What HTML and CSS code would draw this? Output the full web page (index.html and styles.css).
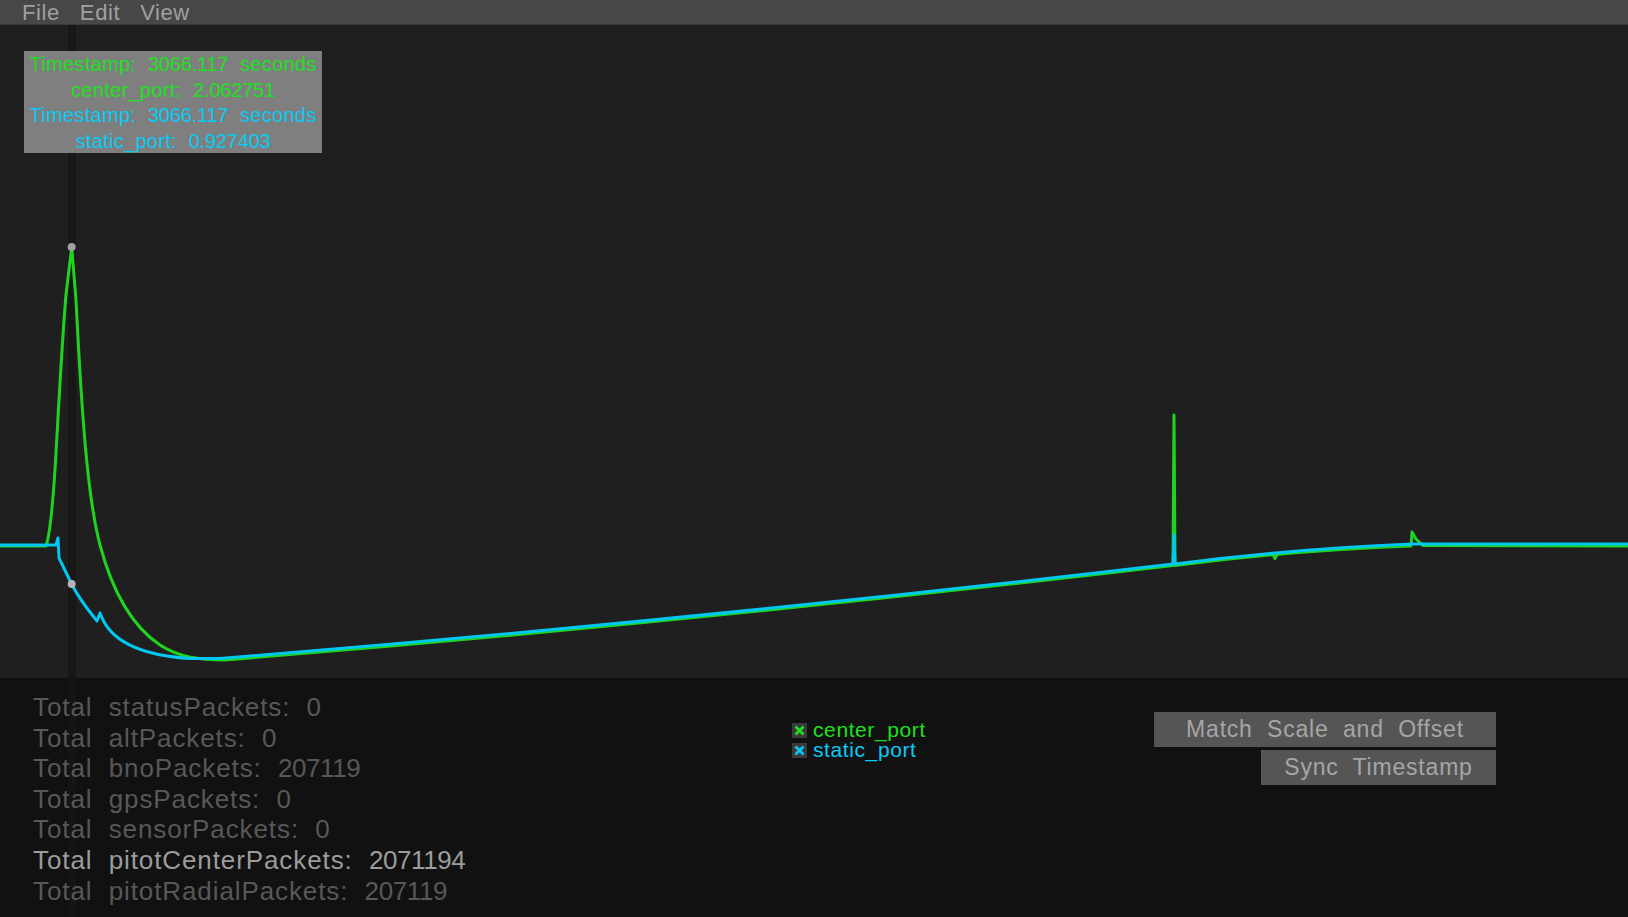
FILE: index.html
```html
<!DOCTYPE html>
<html>
<head>
<meta charset="utf-8">
<link rel="stylesheet" href="styles.css">
</head>
<body>
<div class="app">
  <div class="menubar">
    <span class="menu-item">File</span>
    <span class="menu-item">Edit</span>
    <span class="menu-item">View</span>
  </div>
  <div class="plot">
    <svg class="plot-svg" viewBox="0 0 1628 653" preserveAspectRatio="none">
      <rect x="68" y="0" width="8" height="653" fill="#171717"/>
      <g transform="translate(0,-25)">
        <path class="green" d="M0,546 L46,546 C49,538 52,515 55,470 C58,420 62,340 66,295 L71.7,247 L76,300 C82,420 88,500 100,545 C112,590 130,625 160,645 C180,658 200,659.5 225,660 Q697,621.5 1173,565.5 L1174,415 L1175,565.5 Q1290,550.5 1411,546 L1412,532 L1416,539 L1423,545.5 L1628,546"/>
        <path class="green thin" d="M1271,552 L1275,559 L1279,552"/>
        <path class="cyan" d="M0,545 L56,545 L58,538 L59,558 C63,566 68,577 71.7,584 C78,597 88,610 97,621 L100,613 L103,620 C112,638 135,655 190,658.5 L220,658.5 Q697,620 1173,564 L1174,535 L1175,564 Q1290,549 1412,544 L1628,544"/>
        <circle cx="71.7" cy="247" r="4" fill="#a0a0a0"/>
        <circle cx="71.7" cy="584" r="4" fill="#b4b4b4"/>
      </g>
    </svg>
    <div class="tooltip">
      <div class="tt-green">Timestamp:&nbsp; <span class="num">3066.117</span>&nbsp; seconds</div>
      <div class="tt-green">center_port:&nbsp; <span class="num">2.062751</span></div>
      <div class="tt-cyan">Timestamp:&nbsp; <span class="num">3066.117</span>&nbsp; seconds</div>
      <div class="tt-cyan">static_port:&nbsp; <span class="num">0.927403</span></div>
    </div>
  </div>
  <div class="panel">
    <div class="stats">
      <div class="stat">Total&nbsp; statusPackets:&nbsp; <span class="num">0</span></div>
      <div class="stat">Total&nbsp; altPackets:&nbsp; <span class="num">0</span></div>
      <div class="stat">Total&nbsp; bnoPackets:&nbsp; <span class="num">207119</span></div>
      <div class="stat">Total&nbsp; gpsPackets:&nbsp; <span class="num">0</span></div>
      <div class="stat">Total&nbsp; sensorPackets:&nbsp; <span class="num">0</span></div>
      <div class="stat hi">Total&nbsp; pitotCenterPackets:&nbsp; <span class="num">2071194</span></div>
      <div class="stat">Total&nbsp; pitotRadialPackets:&nbsp; <span class="num">207119</span></div>
    </div>
    <div class="legend">
      <div class="legend-row green-text">
        <svg class="check" viewBox="0 0 15 15"><rect width="15" height="15" fill="#3a3a3a"/><path d="M3.5,3.5 L11.5,11.5 M11.5,3.5 L3.5,11.5" stroke="#1ee01e" stroke-width="2.6"/></svg>
        <span>center_port</span>
      </div>
      <div class="legend-row cyan-text">
        <svg class="check" viewBox="0 0 15 15"><rect width="15" height="15" fill="#3a3a3a"/><path d="M3.5,3.5 L11.5,11.5 M11.5,3.5 L3.5,11.5" stroke="#08cbf5" stroke-width="2.6"/></svg>
        <span>static_port</span>
      </div>
    </div>
    <div class="buttons">
      <div class="btn btn-wide">Match&nbsp; Scale&nbsp; and&nbsp; Offset</div>
      <div class="btn btn-narrow">Sync&nbsp; Timestamp</div>
    </div>
  </div>
</div>
</body>
</html>
```
FILE: styles.css
```css
* { box-sizing: border-box; }
html, body { margin: 0; padding: 0; }
body {
  width: 1628px;
  height: 917px;
  overflow: hidden;
  background: #111111;
  font-family: "Liberation Sans", Arial, sans-serif;
}
.app {
  display: flex;
  flex-direction: column;
  height: 917px;
}
.menubar {
  height: 25px;
  flex: none;
  background: #474747;
  border-bottom: 1px solid #3b3b3b;
  display: flex;
  align-items: center;
  padding-left: 22px;
  gap: 20px;
}
.menu-item {
  color: #a0a0a0;
  font-size: 22px;
  line-height: 25px;
  letter-spacing: 0.6px;
}
.plot {
  height: 653px;
  flex: none;
  background: #1f1f1f;
  position: relative;
}
.plot-svg {
  display: block;
  width: 100%;
  height: 100%;
}
.green {
  fill: none;
  stroke: #1fd41f;
  stroke-width: 3;
  stroke-linejoin: round;
}
.green.thin { stroke-width: 2.5; }
.cyan {
  fill: none;
  stroke: #00c8f2;
  stroke-width: 3;
  stroke-linejoin: round;
}
.tooltip {
  position: absolute;
  left: 24px;
  top: 26px;
  width: 298px;
  height: 102px;
  background: #7f7f7f;
  text-align: center;
  padding-top: 1px;
  font-size: 20px;
  line-height: 25.5px;
  letter-spacing: 0.3px;
}
.tooltip .num { letter-spacing: -0.2px; }
.tt-green { color: #1ee01e; }
.tt-cyan { color: #08cbf5; }
.panel {
  flex: 1;
  display: flex;
  background: #111111 linear-gradient(to right, transparent 68px, #151515 68px, #151515 76px, transparent 76px);
}
.stats {
  width: 792px;
  padding: 14px 0 0 33px;
}
.stat {
  color: #585858;
  font-size: 26px;
  line-height: 30.6px;
  letter-spacing: 0.9px;
}
.stat .num { letter-spacing: -0.4px; }
.stat.hi { color: #9c9c9c; }
.legend {
  width: 362px;
  padding-top: 42px;
}
.legend-row {
  display: flex;
  align-items: center;
  font-size: 21px;
  line-height: 20px;
  height: 20px;
  letter-spacing: 0.6px;
}
.green-text { color: #1ee01e; }
.cyan-text { color: #08cbf5; }
.check {
  width: 15px;
  height: 15px;
  margin-right: 6px;
  flex: none;
}
.buttons {
  display: flex;
  flex-direction: column;
  align-items: flex-end;
  width: 342px;
  padding-top: 34px;
  gap: 3px;
}
.btn {
  background: #555555;
  color: #a6a6a6;
  font-size: 23px;
  letter-spacing: 0.8px;
  height: 35px;
  line-height: 35px;
  text-align: center;
}
.btn-wide { width: 342px; }
.btn-narrow { width: 235px; }
```
